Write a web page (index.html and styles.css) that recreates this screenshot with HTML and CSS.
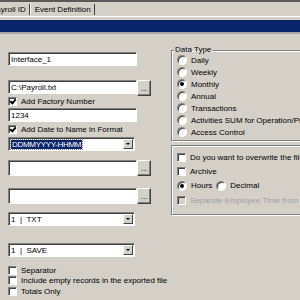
FILE: index.html
```html
<!DOCTYPE html>
<html lang="en">
<head>
    <meta charset="UTF-8">
    <title>Event Definition</title>
    <link rel="stylesheet" href="styles.css">
</head>
<body>

    <!-- Tab strip -->
    <div class="topline"></div>
    <div class="tabs">
        <span class="tab first">Payroll ID</span>
        <span class="tab">Event Definition</span>
    </div>
    <div class="panel-top"></div>
    <div class="titlebar"></div>

    <div class="form">

        <!-- Left column -->
        <div class="col-left">
            <div class="field-row r1">
                <div class="field">Interface_1</div>
            </div>
            <div class="field-row r2">
                <div class="field">C:\Payroll.txt</div>
                <div class="btn">...</div>
            </div>
            <label class="check r3"><span class="box checked"></span>Add Factory Number</label>
            <div class="field-row r4">
                <div class="field">1234</div>
            </div>
            <label class="check r5"><span class="box checked"></span>Add Date to Name in Format</label>
            <div class="field-row r6">
                <div class="field combo"><span class="sel">DDMMYYYY-HHMM</span><span class="arrow"></span></div>
            </div>
            <div class="field-row r7">
                <div class="field tall"></div>
                <div class="btn">...</div>
            </div>
            <div class="field-row r8">
                <div class="field tall"></div>
                <div class="btn">...</div>
            </div>
            <div class="field-row r9">
                <div class="field combo">1&nbsp;&nbsp;|&nbsp;&nbsp;TXT<span class="arrow"></span></div>
            </div>
            <div class="field-row r10">
                <div class="field combo">1&nbsp;&nbsp;|&nbsp;&nbsp;SAVE<span class="arrow"></span></div>
            </div>
            <div class="checks">
                <label class="check"><span class="box"></span>Separator</label>
                <label class="check"><span class="box"></span>Include empty records in the exported file</label>
                <label class="check"><span class="box"></span>Totals Only</label>
            </div>
        </div>

        <!-- Right column -->
        <div class="col-right">
            <fieldset class="group data-type">
                <legend>Data Type</legend>
                <label class="radio"><span class="dot"></span>Daily</label>
                <label class="radio"><span class="dot"></span>Weekly</label>
                <label class="radio"><span class="dot on"></span>Monthly</label>
                <label class="radio"><span class="dot"></span>Annual</label>
                <label class="radio"><span class="dot"></span>Transactions</label>
                <label class="radio"><span class="dot"></span>Activities SUM for Operation/Product</label>
                <label class="radio"><span class="dot"></span>Access Control</label>
            </fieldset>

            <fieldset class="group options">
                <label class="check"><span class="box"></span>Do you want to overwrite the file?</label>
                <label class="check"><span class="box"></span>Archive</label>
                <div class="radio-line">
                    <label class="radio"><span class="dot on"></span>Hours</label>
                    <label class="radio"><span class="dot"></span>Decimal</label>
                </div>
                <label class="check disabled"><span class="box"></span>Separate Employee Time from Machine</label>
            </fieldset>
        </div>

    </div>

</body>
</html>
```

FILE: styles.css
```css
* {
    margin: 0;
    padding: 0;
    box-sizing: border-box;
}

body {
    width: 300px;
    height: 300px;
    overflow: hidden;
    background-color: #d4d0c8;
    font-family: "Liberation Sans", Arial, sans-serif;
    font-size: 8px;
    color: #000;
}

/* Tabs */
.topline {
    height: 2px;
    background-color: #5a5a5a;
}

.tabs {
    height: 14px;
    display: flex;
    align-items: center;
    white-space: nowrap;
}

.tab {
    padding: 0 3px 0 4px;
    height: 11px;
    line-height: 11px;
    border-left: 1px solid #fff;
    border-right: 1px solid #404040;
}

.tab.first {
    margin-left: -14px;
}

.panel-top {
    height: 4px;
    border-top: 1px solid #fff;
}

.titlebar {
    height: 14px;
    background-color: #0a246a;
    border-bottom: 2px solid #a8a8a8;
}

/* Form */
.form {
    display: flex;
    padding-left: 8px;
    white-space: nowrap;
}

.col-left {
    width: 143px;
    display: flex;
    flex-direction: column;
}

.field-row {
    display: flex;
    height: 15px;
}

.field {
    position: relative;
    width: 129px;
    height: 14px;
    background-color: #fff;
    border: 1px solid;
    border-color: #808080 #fff #fff #808080;
    box-shadow: inset 1px 1px #404040;
    padding: 2px 2px 0 2px;
    line-height: 10px;
}

.field.tall {
    height: 16px;
}

.btn {
    width: 14px;
    height: 16px;
    background-color: #d4d0c8;
    border: 1px solid;
    border-color: #fff #404040 #404040 #fff;
    box-shadow: inset -1px -1px #808080;
    text-align: center;
    line-height: 16px;
    font-size: 8px;
}

.combo {
    width: 127px;
}

.arrow {
    position: absolute;
    right: 1px;
    top: 1px;
    width: 10px;
    height: 10px;
    background-color: #d4d0c8;
    border: 1px solid;
    border-color: #fff #404040 #404040 #fff;
}

.arrow::after {
    content: "";
    position: absolute;
    left: 2px;
    top: 3px;
    border-left: 2px solid transparent;
    border-right: 2px solid transparent;
    border-top: 2px solid #000;
}

.sel {
    background-color: #0a246a;
    color: #fff;
    padding: 0 1px;
    outline: 1px dotted #888;
    letter-spacing: -0.3px;
}

.r1 { margin-top: 18px; }
.r2 { margin-top: 13px; }
.r3 { margin-top: 0; }
.r4 { margin-top: 1px; }
.r5 { margin-top: 0; }
.r6 { margin-top: 2px; }
.r7 { margin-top: 8px; height: 17px; }
.r8 { margin-top: 11px; height: 17px; }
.r9 { margin-top: 7px; }
.r10 { margin-top: 16px; }

.checks {
    margin-top: 7px;
    display: flex;
    flex-direction: column;
}

/* Checkboxes and radios */
.check, .radio {
    display: flex;
    align-items: center;
    height: 10.5px;
    gap: 4px;
}

.check.r3, .check.r5 {
    height: 12px;
}

.box {
    position: relative;
    width: 9px;
    height: 9px;
    background-color: #fff;
    border: 1px solid;
    border-color: #808080 #fff #fff #808080;
    box-shadow: inset 1px 1px #404040;
    flex-shrink: 0;
}

.box.checked::after {
    content: "";
    position: absolute;
    left: 2px;
    top: 0px;
    width: 2px;
    height: 4px;
    border-right: 2px solid #000;
    border-bottom: 2px solid #000;
    transform: rotate(40deg);
}

.dot {
    position: relative;
    width: 10px;
    height: 10px;
    border-radius: 50%;
    background-color: #fff;
    border: 1px solid;
    border-color: #808080 #fff #fff #808080;
    box-shadow: inset 1px 1px #404040;
    flex-shrink: 0;
}

.dot.on::after {
    content: "";
    position: absolute;
    left: 2px;
    top: 2px;
    width: 4px;
    height: 4px;
    border-radius: 50%;
    background-color: #000;
}

/* Right column */
.col-right {
    margin-left: 20px;
    width: 200px;
}

.group {
    border: 1px solid #808080;
    box-shadow: 1px 1px #fff, inset 1px 1px #fff;
}

.data-type {
    margin-top: 12px;
    height: 95px;
    padding: 0 0 0 5px;
}

.data-type legend {
    margin-left: -3px;
    padding: 0 1px;
    line-height: 8px;
}

.data-type .radio {
    height: 12px;
}

.options {
    margin-top: 4px;
    height: 70px;
    padding: 4px 0 0 5px;
}

.options .check {
    height: 14px;
}

.radio-line {
    display: flex;
    gap: 4px;
    height: 15px;
}

.radio-line .radio {
    height: 15px;
}

.check.disabled {
    color: #a0a0a0;
}

.check.disabled .box {
    background-color: #d4d0c8;
}
```
